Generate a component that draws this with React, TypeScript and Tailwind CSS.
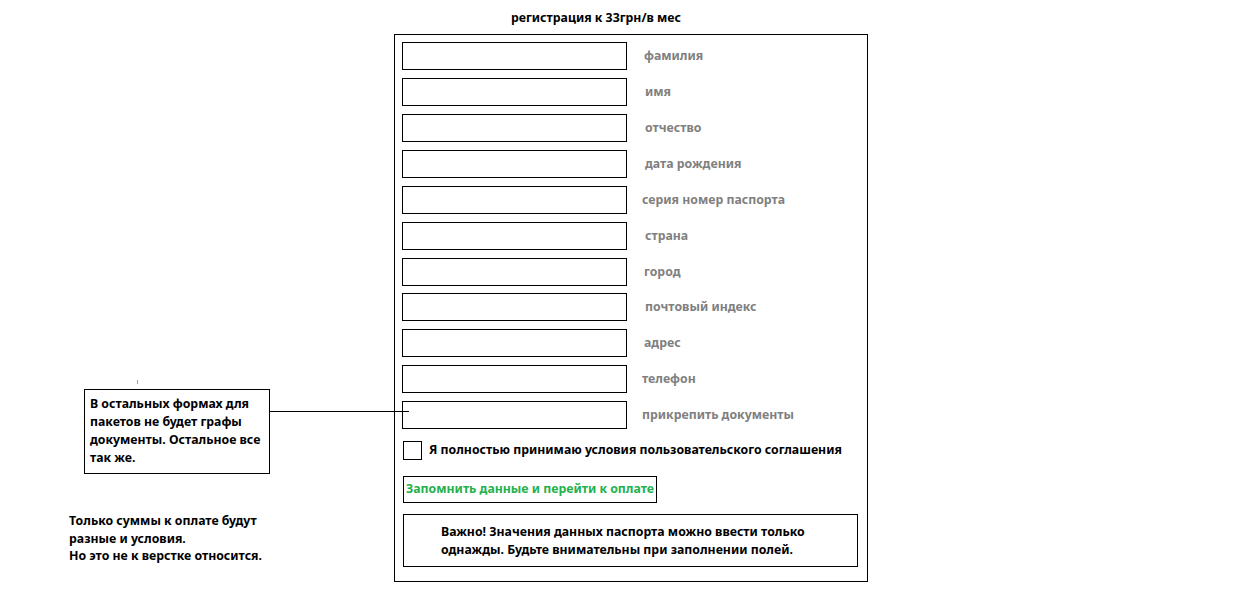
const FIELDS: { label: string; top: string; ml: string }[] = [
  { label: 'фамилия', top: 'mt-0', ml: 'ml-[17px]' },
  { label: 'имя', top: 'mt-[8px]', ml: 'ml-[18px]' },
  { label: 'отчество', top: 'mt-[8px]', ml: 'ml-[18px]' },
  { label: 'дата рождения', top: 'mt-[8px]', ml: 'ml-[18px]' },
  { label: 'серия номер паспорта', top: 'mt-[8px]', ml: 'ml-[15px]' },
  { label: 'страна', top: 'mt-[8px]', ml: 'ml-[18px]' },
  { label: 'город', top: 'mt-[8px]', ml: 'ml-[17px]' },
  { label: 'почтовый индекс', top: 'mt-[7px]', ml: 'ml-[18px]' },
  { label: 'адрес', top: 'mt-[8px]', ml: 'ml-[17px]' },
  { label: 'телефон', top: 'mt-[8px]', ml: 'ml-[15px]' },
  { label: 'прикрепить документы', top: 'mt-[8px]', ml: 'ml-[15px]' },
];

export default function App() {
  return (
    <div className="relative flex w-[1240px] h-[590px] bg-white text-black font-bold text-[12.3px] font-['Noto_Sans',sans-serif] overflow-hidden">
      {/* left notes */}
      <div className="w-[394px] shrink-0">
        <div className="ml-[137px] mt-[380px] w-px h-[4px] bg-[#6fa8dc]" />
        <div className="ml-[84px] mt-[5px] w-[186px] h-[85px] border border-black pl-[5px] pt-[5px] leading-[18px]">
          В остальных формах для<br />
          пакетов не будет графы<br />
          документы. Остальное все<br />
          так же.
        </div>
        <div className="ml-[69px] mt-[38px] leading-[17.5px]">
          Только суммы к оплате будут<br />
          разные и условия.<br />
          Но это не к верстке относится.
        </div>
      </div>

      {/* connector line */}
      <div className="absolute left-[269px] top-[411px] w-[140px] h-px bg-black" />

      {/* registration form */}
      <div className="pt-[9px]">
        <div className="ml-[117px] h-[18px] leading-[18px] whitespace-nowrap">регистрация к 33грн/в мес</div>
        <div className="mt-[7px] w-[474px] h-[548px] border border-black pl-[7px] pt-[7px]">
          {FIELDS.map((f) => (
            <div key={f.label} className={`flex items-center leading-[16px] ${f.top}`}>
              <div className="w-[225px] h-[28px] border border-black shrink-0" />
              <span className={`${f.ml} -mt-px text-[#808080]`}>{f.label}</span>
            </div>
          ))}

          <div className="flex items-center mt-[12px] ml-px">
            <div className="w-[19px] h-[19px] border border-black shrink-0" />
            <span className="ml-[7px] whitespace-nowrap">Я полностью принимаю условия пользовательского соглашения</span>
          </div>

          <div className="mt-[16px] ml-px w-[254px] h-[27px] border border-black flex items-center pl-[2px] text-[#22b14c] whitespace-nowrap overflow-hidden">
            Запомнить данные и перейти к оплате
          </div>

          <div className="mt-[11px] ml-px w-[455px] h-[53px] border border-black pl-[37px] pt-[8px] leading-[18px] whitespace-nowrap">
            Важно! Значения данных паспорта можно ввести только<br />
            однажды. Будьте внимательны при заполнении полей.
          </div>
        </div>
      </div>
    </div>
  );
}
